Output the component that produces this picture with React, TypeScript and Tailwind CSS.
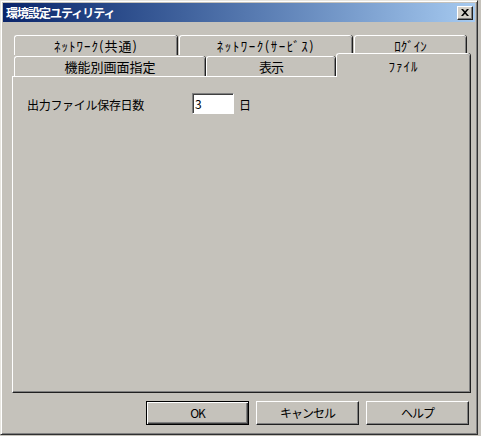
import React from 'react';

const font = { fontFamily: '"Noto Sans CJK JP", "Liberation Sans", sans-serif' };

const Tab: React.FC<{ label: string; width: string; selected?: boolean; tracking?: string }> = ({ label, width, selected, tracking }) => (
    <div
        className={`${width} ${selected ? 'h-[24px] -mt-[3px] -mb-[1px] z-10 bg-[#c5c2bb]' : 'h-[20px]'} relative flex items-center justify-center border-t border-l border-white rounded-t-[3px] shadow-[inset_-1px_0_0_#808080,1px_0_0_#202020] text-[13px] text-black`}
    >
        <span className={`leading-none ${tracking ?? 'tracking-[1px]'}`}>{label}</span>
    </div>
);

const Button: React.FC<{ label: string; isDefault?: boolean }> = ({ label, isDefault }) => (
    <div
        className={`w-[103px] h-[24px] flex items-center justify-center text-[12px] tracking-[-1px] text-black ${
            isDefault
                ? 'border border-black shadow-[inset_1px_1px_0_#ffffff,inset_-1px_-1px_0_#404040,inset_-2px_-2px_0_#808080]'
                : 'border-t border-l border-white border-r border-b border-r-[#202020] border-b-[#202020] shadow-[inset_-1px_-1px_0_#808080]'
        }`}
    >
        {label}
    </div>
);

export default function App() {
    return (
        <div className="w-[481px] h-[436px] bg-[#c5c2bb] overflow-hidden" style={font}>
            <div className="w-[478px] h-[435px] border-t border-l border-[#e8e6e0] border-r border-b border-r-[#303030] border-b-[#303030] shadow-[inset_1px_1px_0_#ffffff,inset_-1px_-1px_0_#808080] px-[2px] pt-[2px]">
                {/* title bar */}
                <div className="h-[19px] bg-gradient-to-r from-[#0a246a] to-[#a6caf0] flex items-center justify-between pl-[3px] pr-[2px]">
                    <span className="text-white font-bold text-[12px] leading-none tracking-[-1px]">環境設定ユティリティ</span>
                    <div className="w-[16px] h-[14px] bg-[#d4d0c8] border-t border-l border-white border-r border-b border-r-[#202020] border-b-[#202020] shadow-[inset_-1px_-1px_0_#808080] flex items-center justify-center">
                        <svg width="8" height="7" viewBox="0 0 8 7">
                            <path d="M0 0h2l2 2.2L6 0h2L5 3.5 8 7H6L4 4.8 2 7H0l3-3.5z" fill="#000" />
                        </svg>
                    </div>
                </div>

                {/* tabs */}
                <div className="ml-[9px] mt-[13px] w-[459px]">
                    <div className="flex gap-[2px] pl-[2px]">
                        <Tab label="ﾈｯﾄﾜｰｸ(共通)" width="w-[163px]" />
                        <Tab label="ﾈｯﾄﾜｰｸ(ｻｰﾋﾞｽ)" width="w-[173px]" tracking="tracking-[1.5px]" />
                        <Tab label="ﾛｸﾞｲﾝ" width="w-[112px]" tracking="tracking-[0px]" />
                    </div>
                    <div className="flex items-end gap-[1px] pl-[2px] mt-[1px]">
                        <Tab label="機能別画面指定" width="w-[191px]" tracking="tracking-[0px]" />
                        <Tab label="表示" width="w-[129px]" tracking="tracking-[-1px]" />
                        <Tab label="ﾌｧｲﾙ" width="w-[134px]" selected />
                    </div>
                    <div className="h-[317px] border-t border-l border-white border-r border-b border-r-[#202020] border-b-[#202020] shadow-[inset_-1px_-1px_0_#808080] flex items-start pt-[16px] pl-[14px]">
                        <span className="text-[12px] text-black w-[165px] mt-[3px] tracking-[-0.3px]">出力ファイル保存日数</span>
                        <div className="w-[42px] h-[21px] bg-white border-t border-l border-[#808080] border-r border-b border-r-white border-b-white shadow-[inset_1px_1px_0_#404040] flex items-center pl-[2px] text-[12px] text-black">
                            3
                        </div>
                        <span className="text-[12px] text-black ml-[5px] mt-[3px]">日</span>
                    </div>
                </div>

                {/* buttons */}
                <div className="flex justify-end gap-[7px] mt-[8px] pr-[6px]">
                    <Button label="OK" isDefault />
                    <Button label="キャンセル" />
                    <Button label="ヘルプ" />
                </div>
            </div>
        </div>
    );
}
